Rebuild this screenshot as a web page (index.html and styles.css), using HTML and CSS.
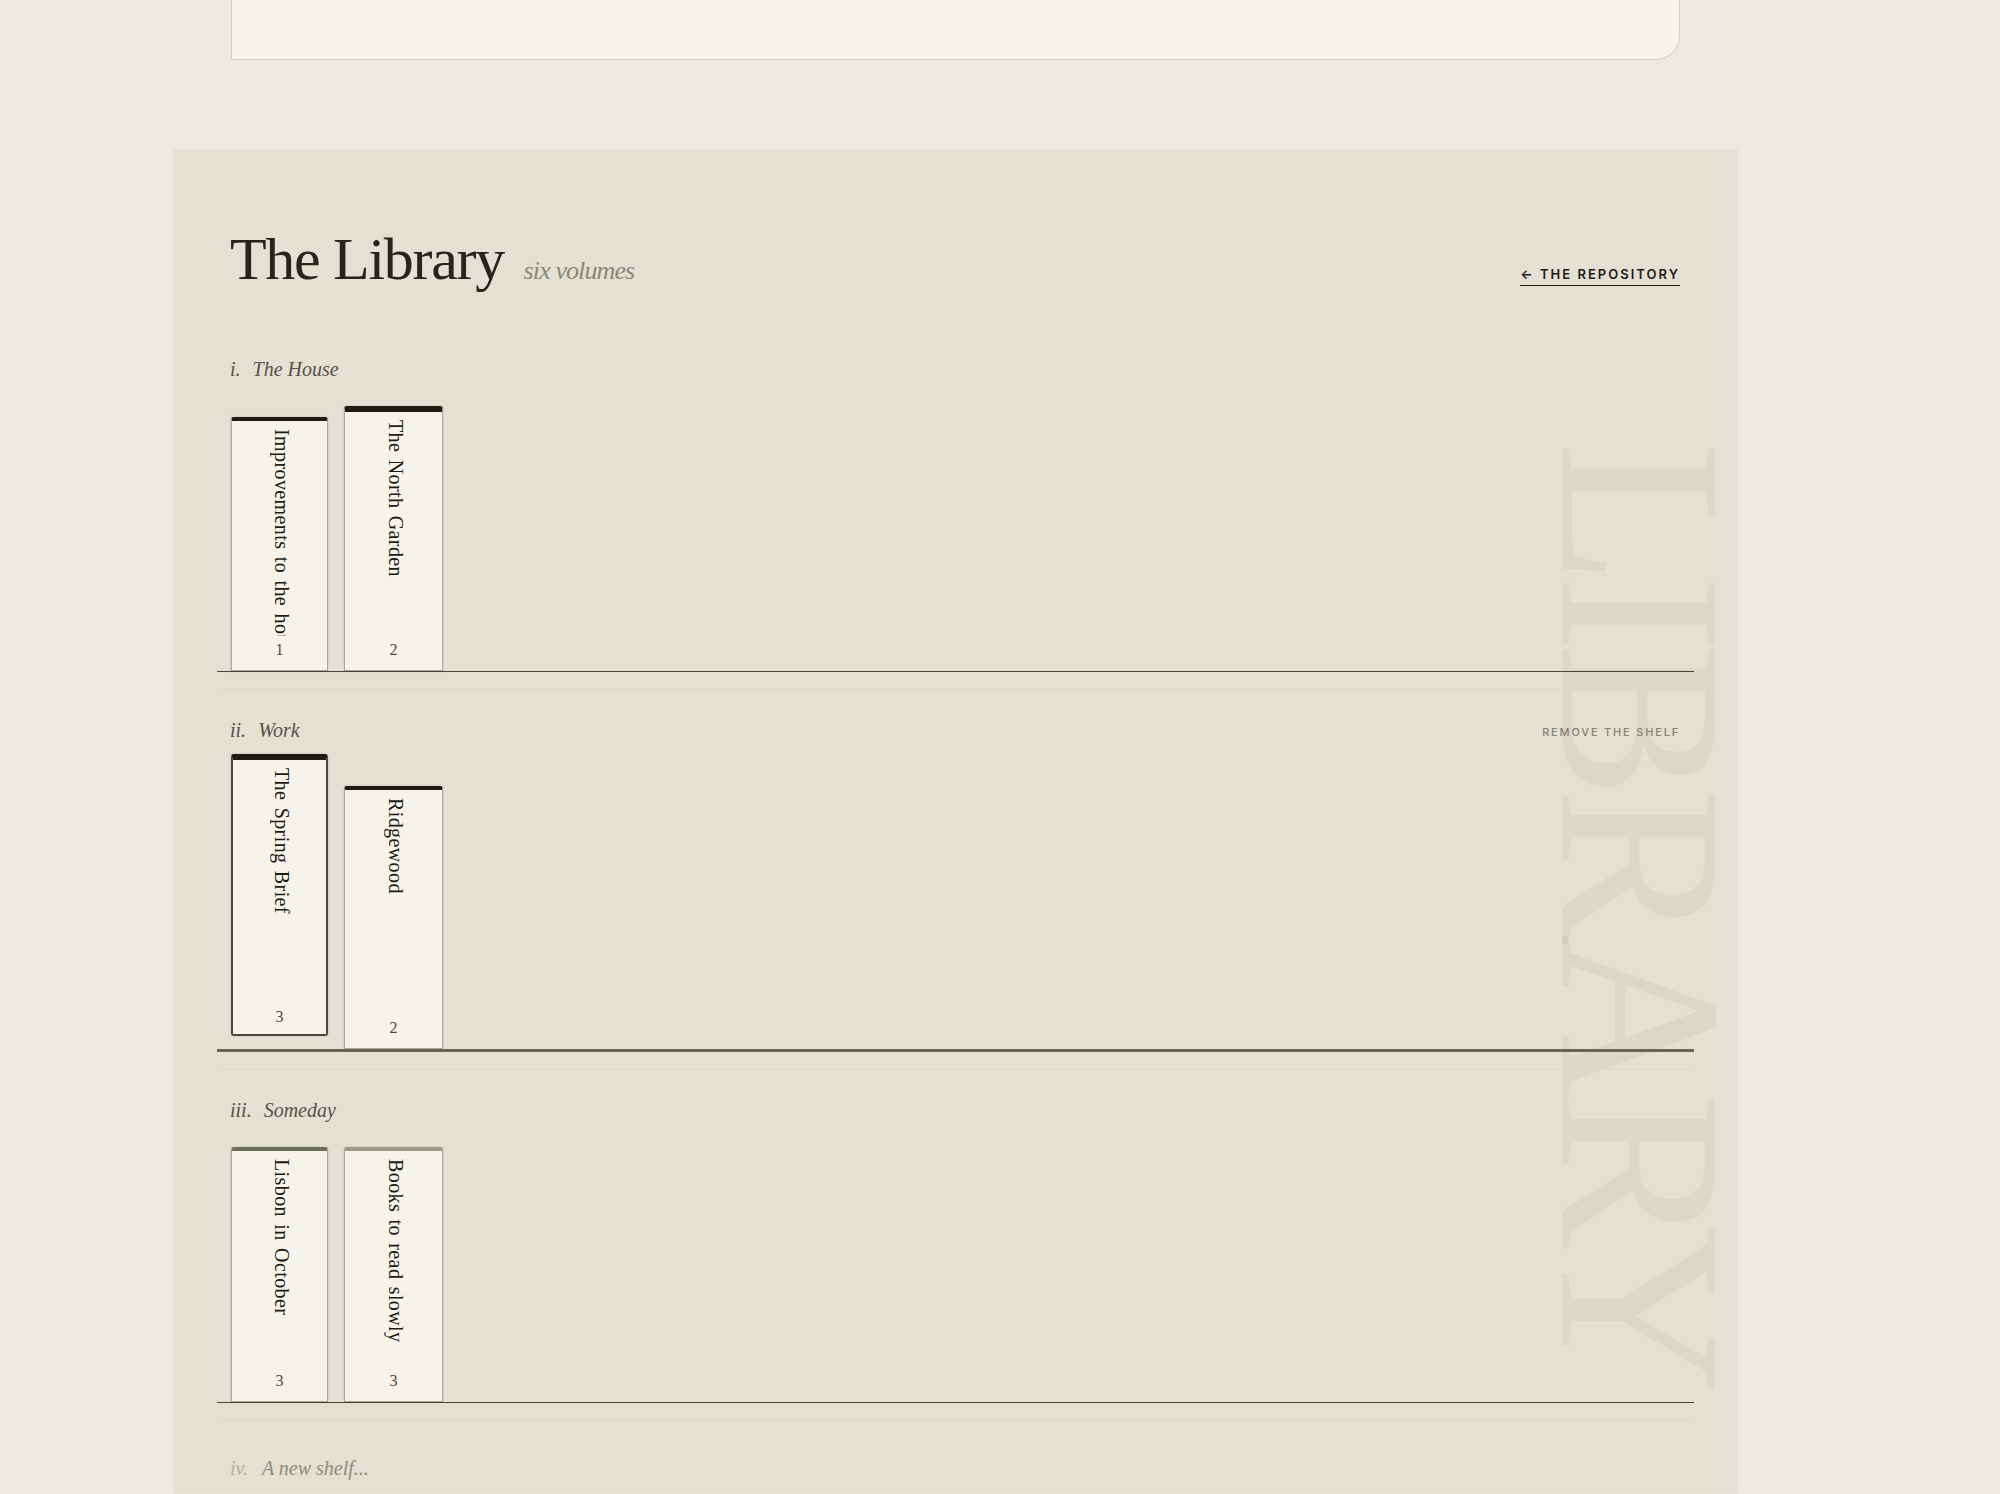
FILE: index.html
```html
<!DOCTYPE html>
<html>
	<head>
		<meta charset="UTF-8">
		<title>The Library</title>
		<link rel="stylesheet" href="styles.css">
	</head>

	<body>
		<div class="page">
			<!--card above the library, scrolled mostly out of view-->
			<div class="card"></div>

			<section class="library">
				<div class="watermark">LIBRARY</div>

				<header class="library-head">
					<h2 class="library-title">The Library <em>six volumes</em></h2>
					<a href="#" class="back-link">← The Repository</a>
				</header>

				<!--shelf i-->
				<div class="shelf">
					<div class="shelf-head">
						<p class="shelf-name"><i>i.</i><span>The House</span></p>
					</div>
					<div class="books">
						<a href="#" class="book" style="height:254px">
							<span class="book-title">Improvements to the house and grounds</span>
							<span class="book-count">1</span>
						</a>
						<a href="#" class="book book-wide thick" style="height:265px">
							<span class="book-title">The North Garden</span>
							<span class="book-count">2</span>
						</a>
					</div>
					<div class="shelf-board"></div>
				</div>

				<!--shelf ii-->
				<div class="shelf">
					<div class="shelf-head">
						<p class="shelf-name"><i>ii.</i><span>Work</span></p>
						<a href="#" class="remove-link">Remove the shelf</a>
					</div>
					<div class="books">
						<a href="#" class="book thick lifted" style="height:282px">
							<span class="book-title">The Spring Brief</span>
							<span class="book-count">3</span>
						</a>
						<a href="#" class="book book-wide" style="height:263px">
							<span class="book-title">Ridgewood</span>
							<span class="book-count">2</span>
						</a>
					</div>
					<div class="shelf-board heavy"></div>
				</div>

				<!--shelf iii-->
				<div class="shelf">
					<div class="shelf-head">
						<p class="shelf-name"><i>iii.</i><span>Someday</span></p>
					</div>
					<div class="books">
						<a href="#" class="book moss" style="height:255px">
							<span class="book-title">Lisbon in October</span>
							<span class="book-count">3</span>
						</a>
						<a href="#" class="book book-wide stone" style="height:255px">
							<span class="book-title">Books to read slowly</span>
							<span class="book-count">3</span>
						</a>
					</div>
					<div class="shelf-board"></div>
				</div>

				<!--new shelf-->
				<div class="shelf shelf-new">
					<div class="shelf-head">
						<p class="shelf-name"><i>iv.</i><span>A new shelf...</span></p>
					</div>
				</div>
			</section>
		</div>
	</body>
</html>
```

FILE: styles.css
```css
*{
	margin: 0;
	padding: 0;
	box-sizing: border-box;
}
html,body{
	height: 1494px;
	overflow: hidden;
}
body{
	background: #edeae1;
	color: #26241c;
	font-family: "Liberation Serif", serif;
}
a{
	color: inherit;
	text-decoration: none;
}
.page{
	width: 1738px;
	padding-left: 173px;
}
.card{
	width: 1449px;
	height: 60px;
	margin-left: 58px;
	background: #f6f3ea;
	border: 1px solid #d5d2bf;
	border-top: 0;
	border-radius: 0 0 24px 0;
}
.library{
	position: relative;
	height: 1345px;
	margin-top: 89px;
	padding: 0 57px;
	background: #e4e0d3;
	border: 1px solid #e7e4d8;
}
.watermark{
	position: absolute;
	top: 292px;
	right: -21px;
	writing-mode: vertical-rl;
	font-size: 234px;
	line-height: 1;
	letter-spacing: -10.3px;
	color: rgba(60,58,30,0.05);
}
.library-head{
	display: flex;
	justify-content: space-between;
	align-items: baseline;
	height: 206px;
	padding-top: 76px;
}
.library-title{
	margin-left: -1px;
	font-size: 60px;
	font-weight: normal;
	letter-spacing: -1.3px;
	line-height: 66px;
}
.library-title em{
	margin-left: 6px;
	font-size: 26px;
	letter-spacing: -0.9px;
	color: #8a8778;
}
.back-link{
	padding-bottom: 3px;
	border-bottom: 1px solid #1d1b14;
	font-family: Inter, sans-serif;
	font-size: 13px;
	font-weight: 600;
	letter-spacing: 0.155em;
	text-transform: uppercase;
	color: #1d1b14;
}
.shelf{
	position: relative;
	padding-bottom: 18px;
	margin-bottom: 27px;
}
.shelf-head{
	display: flex;
	justify-content: space-between;
	align-items: center;
	height: 26px;
	margin-bottom: 24px;
}
.shelf-name{
	display: flex;
	gap: 12px;
	margin-left: -1px;
	font-size: 20px;
	font-style: italic;
	color: #55524a;
}
.shelf-new{
	padding-top: 7px;
}
.shelf-new .shelf-name{
	gap: 14px;
	color: #8f8c7e;
}
.shelf-new .shelf-name i{
	color: #b5b09a;
}
.remove-link{
	margin-top: 4px;
	font-family: Inter, sans-serif;
	font-size: 11px;
	font-weight: 500;
	letter-spacing: 0.165em;
	text-transform: uppercase;
	color: #85826f;
}
.books{
	display: flex;
	align-items: flex-end;
	gap: 16px;
}
.book{
	display: flex;
	flex-direction: column;
	align-items: center;
	width: 97px;
	padding: 8px 0 12px;
	background: #f6f3eb;
	border: 1px solid #aaa798;
	border-top: 4px solid #1d1b14;
	border-radius: 3px 3px 0 0;
	box-shadow: 0 0 2px rgba(60,55,30,0.25);
}
.book-wide{
	width: 99px;
}
.thick{
	border-top-width: 6px;
}
.lifted{
	transform: translateY(-13px);
	padding-bottom: 9px;
	border: 2px solid #4a483c;
	border-top: 6px solid #1d1b14;
	border-radius: 3px;
}
.moss{
	border-top-color: #6b6f5f;
}
.stone{
	border-top-color: #9c9a88;
}
.book-title{
	flex: 1;
	min-height: 0;
	margin-left: 5px;
	overflow: hidden;
	writing-mode: vertical-rl;
	white-space: nowrap;
	font-size: 20px;
	letter-spacing: 0.02em;
	word-spacing: 2px;
	line-height: 24px;
	color: #1d1b14;
}
.book-count{
	margin-top: 5px;
	font-size: 16px;
	line-height: 17px;
	color: #4c4a40;
}
.shelf-board{
	height: 1px;
	margin: 0 -14px;
	background: #45453a;
}
.shelf-board.heavy{
	height: 3px;
	background: #66655a;
}
.shelf::after{
	content: "";
	position: absolute;
	left: -11px;
	right: -11px;
	bottom: 0;
	height: 1px;
	background: #dcd8ca;
}
.shelf:last-child::after{
	display: none;
}
```
